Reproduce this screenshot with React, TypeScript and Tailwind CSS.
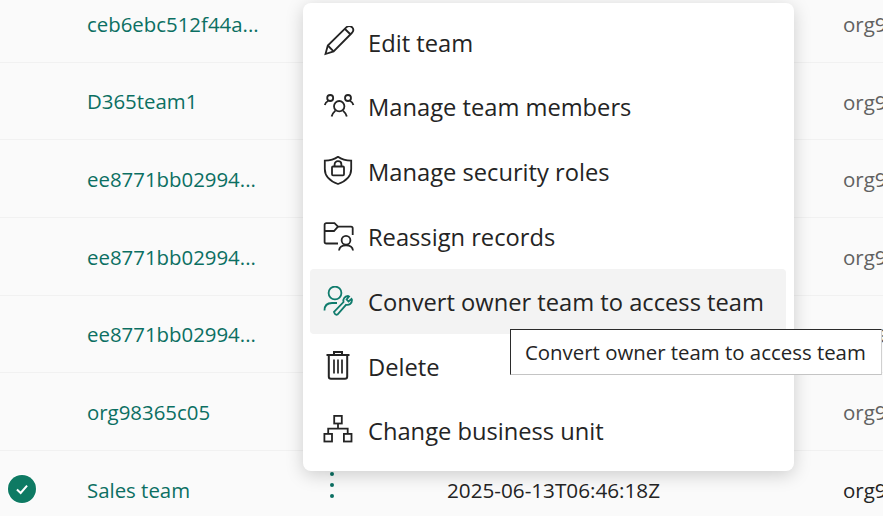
import type { ReactNode } from "react";

const rows = [
  { name: "ceb6ebc512f44a..." },
  { name: "D365team1" },
  { name: "ee8771bb02994..." },
  { name: "ee8771bb02994..." },
  { name: "ee8771bb02994..." },
  { name: "org98365c05" },
  { name: "Sales team", selected: true, date: "2025-06-13T06:46:18Z" },
];

function Icon({ children }: { children: ReactNode }) {
  return (
    <svg viewBox="0 0 32 32" fill="none" stroke="currentColor" strokeWidth="1.8" className="h-8 w-8 shrink-0">
      {children}
    </svg>
  );
}

const menuItems = [
  {
    label: "Edit team",
    icon: (
      <Icon>
        <path d="M2.5 28 L4.8 19.5 L23 1.6 C25 -0.2 27.4 -0.2 29 1.2 C30.6 2.9 30.6 5.3 28.8 7 L10.6 25.4 Z" />
        <path d="M4.8 19.5 L10.6 25.4 M22 3 L27.6 8.5" />
      </Icon>
    ),
  },
  {
    label: "Manage team members",
    icon: (
      <Icon>
        <circle cx="7.2" cy="7" r="3" />
        <circle cx="25" cy="7" r="3" />
        <circle cx="16.2" cy="15.2" r="5.2" />
        <path d="M1.8 14 C2.4 11.6 3.6 10.6 5.2 10 M30.4 14 C29.8 11.6 28.6 10.6 27 10" />
        <path d="M8.6 25.5 C9.2 23 10.4 21.4 12.4 19.6 M23.8 25.5 C23.2 23 22 21.4 20 19.6" />
      </Icon>
    ),
  },
  {
    label: "Manage security roles",
    icon: (
      <Icon>
        <path d="M15 0.8 C18.5 3.4 23 4.6 28.2 4.6 V13 C28.2 20 23.5 25 15 28 C6.5 25 1.8 20 1.8 13 V4.6 C7 4.6 11.5 3.4 15 0.8 Z" />
        <rect x="9" y="10.5" width="12" height="8.8" rx="1" />
        <path d="M11.6 10.5 V8.5 C11.6 6.5 13 5.2 15 5.2 C17 5.2 18.4 6.5 18.4 8.5 V10.5" />
      </Icon>
    ),
  },
  {
    label: "Reassign records",
    icon: (
      <Icon>
        <path d="M15 22.5 H3.4 C2.2 22.5 1.6 21.9 1.6 21 V3.8 C1.6 2.8 2.2 2.2 3.4 2.2 H11.5 L15 5.6 H28 C29 5.6 29.7 6.2 29.7 7.2 V14" />
        <path d="M1.6 10 H11 L15 5.6" />
        <circle cx="23" cy="19.2" r="4.4" />
        <path d="M16 29.5 C16.4 26 19 24.4 23 24.4 C27 24.4 29.6 26 30 29.5" />
      </Icon>
    ),
  },
  {
    label: "Convert owner team to access team",
    active: true,
    icon: (
      <svg viewBox="0 0 32 32" fill="none" stroke="#0f7b6c" strokeWidth="1.8" className="h-8 w-8 shrink-0">
        <circle cx="12" cy="7" r="6.4" />
        <path d="M1.5 24.5 C1.5 19.5 4.5 17 9 17 H14" />
        <path d="M12 28 L11 26 L20.5 16 C19.8 13 21.5 10.5 25 10 L26 10.5 L23.6 13.5 L25.5 15.5 L28.5 13 L29 14 C29 17.5 26 19.5 23 18.8 L14.5 28.5 C13.6 29 12.7 28.8 12 28 Z" />
      </svg>
    ),
  },
  {
    label: "Delete",
    icon: (
      <Icon>
        <path d="M3.5 5 H26.5 M11 5 V2 H19 V5" strokeWidth="2" />
        <path d="M5.8 5 V26.5 C5.8 28 6.6 28.8 8 28.8 H22 C23.4 28.8 24.2 28 24.2 26.5 V5" strokeWidth="2" />
        <path d="M11 9.5 V23.5 M15 9.5 V23.5 M19 9.5 V23.5" strokeWidth="1.7" />
      </Icon>
    ),
  },
  {
    label: "Change business unit",
    icon: (
      <Icon>
        <rect x="11.2" y="0.9" width="7.6" height="7.6" />
        <rect x="1.4" y="18.9" width="7.6" height="7.6" />
        <rect x="20.9" y="18.9" width="7.6" height="7.6" />
        <path d="M15 8.5 V13.6 M5.2 18.9 V13.6 H24.7 V18.9" />
      </Icon>
    ),
  },
];

export default function App() {
  return (
    <div className="relative h-[516px] w-[883px] overflow-hidden bg-[#fafafa] font-['Open_Sans','Liberation_Sans',sans-serif] text-[#242424]">
      {/* Table behind the menu */}
      <div className="-mt-[15px]">
        {rows.map((row) => (
          <div key={row.name + row.date} className="flex h-[77.7px] items-center border-b border-[#f1f1f1] whitespace-nowrap">
            <div className="flex w-[87px] shrink-0 items-center pl-2">
              {row.selected && (
                <span className="flex h-7 w-7 items-center justify-center rounded-full bg-[#0e7a63] ring-1 ring-white">
                  <svg viewBox="0 0 16 16" fill="none" stroke="white" strokeWidth="1.8" className="h-[18px] w-[18px]">
                    <path d="M3.5 8.5 L6.8 11.5 L12.5 5" />
                  </svg>
                </span>
              )}
            </div>
            <div className="w-[243px] shrink-0 pt-px text-[20.4px] text-[#0b6f62]">{row.name}</div>
            <div className="w-[117px] shrink-0">
              {row.selected && (
                <div className="mt-[-8px] flex w-[5px] flex-col gap-[7px]">
                  <span className="h-1 w-1 rounded-full bg-[#0b6f62]" />
                  <span className="h-1 w-1 rounded-full bg-[#0b6f62]" />
                  <span className="h-1 w-1 rounded-full bg-[#0b6f62]" />
                </div>
              )}
            </div>
            <div className="w-[396px] shrink-0 pt-[2px] text-[20.7px]">{row.date}</div>
            <div className={`pt-[2px] text-[20.5px] ${row.selected ? "text-[#242424]" : "text-[#616161]"}`}>org98365c05</div>
          </div>
        ))}
      </div>

      {/* Context menu */}
      <div className="absolute top-[3px] left-[303px] w-[491px] rounded-lg bg-white py-[7px] pr-[8px] pl-[7px] shadow-[0_4px_18px_rgba(0,0,0,0.18)]">
        {menuItems.map((item) => (
          <div
            key={item.label}
            className={`flex h-[64.8px] items-center gap-[13px] rounded pl-[13px] text-[23.7px] whitespace-nowrap ${item.active ? "bg-[#f3f3f3]" : ""}`}
          >
            {item.icon}
            <span className="pt-[2px]">{item.label}</span>
          </div>
        ))}
      </div>

      {/* Tooltip */}
      <div className="absolute top-[329px] left-[510px] flex h-[46px] w-[372px] items-center border-t border-l border-t-[#2b2b2b] border-l-[#2b2b2b] border-r border-b border-r-[#d0d0d0] border-b-[#c4c4c4] bg-white pl-[14px] text-[20.4px] whitespace-nowrap">
        Convert owner team to access team
      </div>
    </div>
  );
}
